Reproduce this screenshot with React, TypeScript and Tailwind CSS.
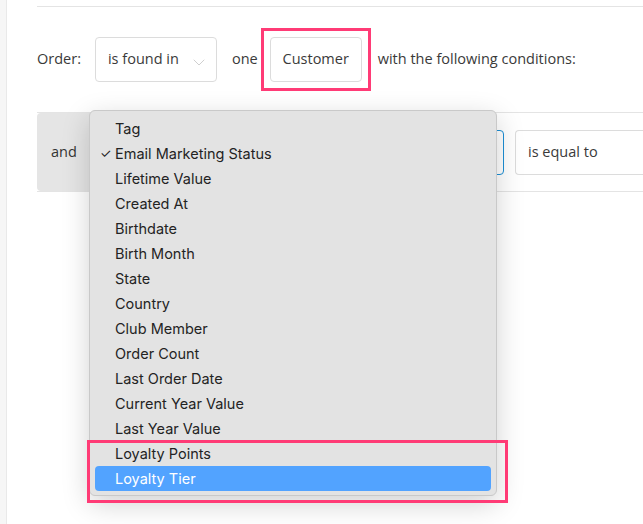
import React from "react";

const FIELDS = [
  "Tag",
  "Email Marketing Status",
  "Lifetime Value",
  "Created At",
  "Birthdate",
  "Birth Month",
  "State",
  "Country",
  "Club Member",
  "Order Count",
  "Last Order Date",
  "Current Year Value",
  "Last Year Value",
  "Loyalty Points",
  "Loyalty Tier",
];

const CHECKED = "Email Marketing Status";
const ACTIVE = "Loyalty Tier";

function Chevron() {
  return (
    <svg width="12" height="7" viewBox="0 0 12 7" fill="none" aria-hidden="true" className="mt-[6px]">
      <path d="M1 1L6 6L11 1" stroke="#cfcfcf" strokeWidth="1" strokeLinecap="round" strokeLinejoin="round" />
    </svg>
  );
}

function FieldMenu() {
  return (
    <div className="absolute left-[89px] top-[110px] w-[408px] rounded-[6px] border border-[#c9c9c9] bg-[#e3e3e3] pb-[4px] pt-[5px] shadow-[0_8px_28px_rgba(0,0,0,0.18)] font-['Inter',sans-serif] text-[14.5px] text-[#232323]">
      {FIELDS.map((f) => {
        const isActive = f === ACTIVE;
        return (
          <div
            key={f}
            className={
              "mx-[5px] flex h-[25px] items-center rounded-[4px] pl-[5px] " +
              (isActive ? "bg-[#52a3ff] text-white" : "")
            }
          >
            <span className="w-[15px] text-[13px] leading-none">{f === CHECKED ? "✓" : ""}</span>
            <span>{f}</span>
          </div>
        );
      })}
      {/* annotation around the loyalty items */}
      <div className="pointer-events-none absolute bottom-[-8px] left-[-3px] right-[-12px] h-[63px] border-[3px] border-[#ff3b76]" />
    </div>
  );
}

export default function App() {
  return (
    <div className="relative flex h-[524px] w-[643px] overflow-hidden bg-white font-['Open_Sans',sans-serif] text-[14.5px] text-[#3a3a3a]">
      {/* left gutter */}
      <div className="w-[7px] shrink-0 border-r border-[#e9e9e9] bg-[#f6f6f6]" />

      <div className="flex-1 pl-[30px]">
        <div className="mt-[6px] border-t border-[#e4e4e4]" />

        {/* condition header */}
        <div className="mt-[30px] flex h-[45px] items-center whitespace-nowrap pb-[1px]">
          <span>Order:</span>
          <div className="ml-[14px] flex h-[45px] w-[122px] items-center gap-[14px] rounded-[4px] border border-[#dcdcdc] pl-[12px]">
            <span>is found in</span>
            <Chevron />
          </div>
          <span className="ml-[15px]">one</span>
          <div className="relative ml-[12px]">
            <div className="flex h-[45px] w-[92px] items-center justify-center rounded-[4px] border border-[#dcdcdc]">
              Customer
            </div>
            <div className="pointer-events-none absolute inset-[-9px] border-[3px] border-[#ff3b76]" />
          </div>
          <span className="ml-[16px]">with the following conditions:</span>
        </div>

        {/* condition row */}
        <div className="mt-[30px] flex h-[80px] items-stretch border-y border-[#e4e4e4]">
          <div className="flex w-[66px] items-center rounded-l-[4px] bg-[#e5e5e5] pl-[14px] text-[#333]">and</div>
          <div className="flex flex-1 items-center gap-[11px] pl-[10px]">
            <div className="h-[45px] w-[391px] shrink-0 rounded-[4px] border border-[#1c8fd6]" />
            <div className="flex h-[45px] flex-1 items-center rounded-l-[4px] border border-r-0 border-[#dcdcdc] pl-[12px]">
              is equal to
            </div>
          </div>
        </div>
      </div>

      <FieldMenu />
    </div>
  );
}
